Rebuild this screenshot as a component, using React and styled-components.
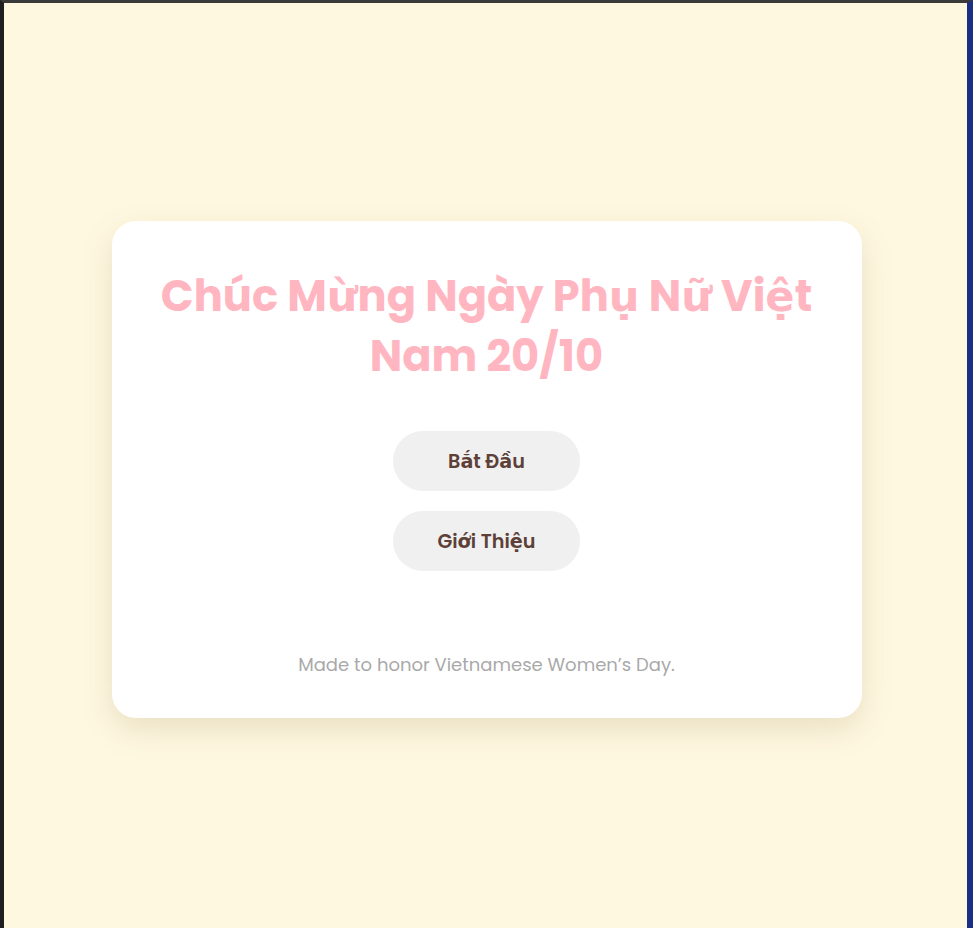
import React from "react";
import styled, { createGlobalStyle } from "styled-components";

const GlobalStyle = createGlobalStyle`
  html, body {
    margin: 0;
    padding: 0;
    height: 100%;
  }
  body {
    font-family: "Poppins", "DejaVu Sans", "Noto Sans", sans-serif;
    background: #2b2b2b;
  }
`;

const Frame = styled.div`
  box-sizing: border-box;
  height: 928px;
  border-top: 3px solid #3a3a3a;
  border-left: 4px solid #1f1f1f;
  border-right: 6px solid #1b2f86;
  background: #fff8e1;
  display: flex;
  align-items: center;
  justify-content: center;
`;

const Card = styled.div`
  box-sizing: border-box;
  width: 750px;
  height: 497px;
  margin-left: 2px;
  margin-top: 8px;
  background: #ffffff;
  border-radius: 24px;
  box-shadow: 0 12px 32px rgba(120, 100, 40, 0.16);
  padding: 45px 30px 40px;
  display: flex;
  flex-direction: column;
  align-items: center;
  text-align: center;
`;

const Title = styled.h1`
  margin: 0 0 45px;
  font-size: 43.2px;
  line-height: 60px;
  font-weight: 700;
  color: #ffb6c1;
`;

const Buttons = styled.div`
  display: flex;
  flex-direction: column;
  gap: 20px;
`;

const Button = styled.button`
  width: 187px;
  height: 60px;
  border: none;
  border-radius: 30px;
  background: #f0f0f0;
  color: #5d4037;
  font-family: inherit;
  font-size: 19.2px;
  font-weight: 600;
  cursor: pointer;
`;

const Footer = styled.p`
  margin: auto 0 0;
  font-size: 18px;
  line-height: 27px;
  color: #a9a9a9;
`;

export default function App() {
  return (
    <>
      <GlobalStyle />
      <Frame>
        <Card>
          <Title>
            Chúc Mừng Ngày Phụ Nữ Việt
            <br />
            Nam 20/10
          </Title>
          <Buttons>
            <Button>Bắt Đầu</Button>
            <Button>Giới Thiệu</Button>
          </Buttons>
          <Footer>Made to honor Vietnamese Women’s Day.</Footer>
        </Card>
      </Frame>
    </>
  );
}
